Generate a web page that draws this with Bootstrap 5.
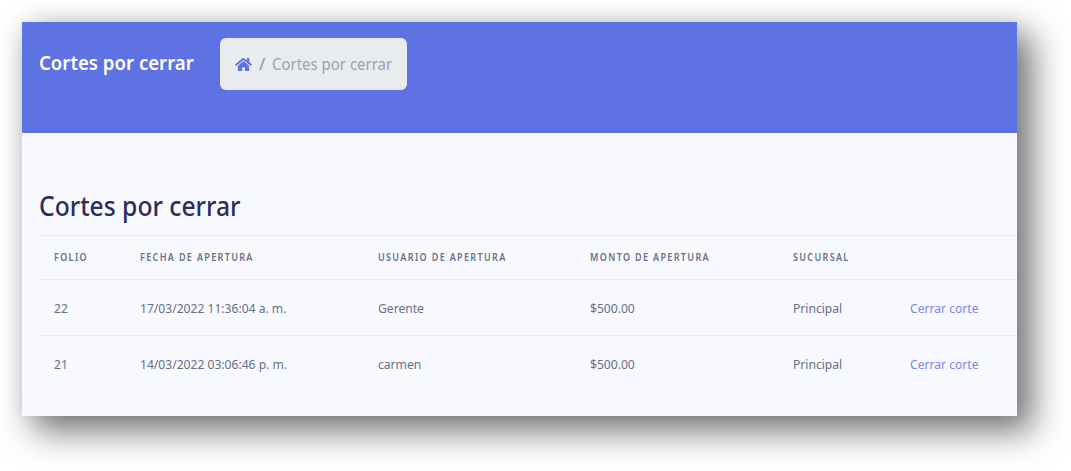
<!DOCTYPE html>
<html lang="es">
<head>
<meta charset="utf-8">
<title>Cortes por cerrar</title>
<link href="https://cdn.jsdelivr.net/npm/bootstrap@5.3.0/dist/css/bootstrap.min.css" rel="stylesheet">
<style>
html,body{height:471px;overflow:hidden;background:#fff;font-family:"Noto Sans","Open Sans",sans-serif}
.stage{padding:22px 54px 55px 22px}
.shell{width:995px;height:394px;background:#f8f9ff;box-shadow:14px 14px 32px 2px rgba(0,0,0,.52),0 0 20px rgba(0,0,0,.09);overflow:hidden}
.hero{height:111px;background:#5e72e4;padding:16px 17px}
.tx{display:inline-block;transform-origin:left center;white-space:nowrap}
.hero-title{width:155px;font-size:20px;font-weight:600;color:#fff;line-height:27px;margin:11px 26px 0 0}
.hero-title .tx{transform:scaleX(.93)}
.crumbs{width:187px;height:52px;background:#e9ecef;border-radius:6px;padding:0 15px;margin:0;font-size:17px;flex-wrap:nowrap;--bs-breadcrumb-margin-bottom:0;--bs-breadcrumb-item-padding-x:7px}
.crumbs .breadcrumb-item{display:flex;align-items:center;color:#9aa3ad;white-space:nowrap}
.crumbs .breadcrumb-item+.breadcrumb-item::before{color:#8a939c}
.crumbs .tx{transform:scaleX(.88)}
.crumbs svg{width:17px;height:15px;display:block}
.content{padding:54px 0 0 17px}
.page-h{font-size:27px;font-weight:500;color:#2f2b5a;line-height:37px;margin:0 0 11px}
.page-h .tx{transform:scaleX(.913)}
.grid-t{width:978px;table-layout:fixed;margin:0;--bs-table-bg:transparent;font-size:14px}
.grid-t th,.grid-t td{padding:0 15px;vertical-align:middle;border-color:#eceef4;border-bottom-width:1px;white-space:nowrap;background:transparent;color:#656f88}
.grid-t thead th{height:44px;border-top:1px solid #eceef4;border-bottom:1px solid #eceef4;font-size:10px;font-weight:600;letter-spacing:1.5px;text-transform:uppercase;color:#6b7188}
.grid-t thead .tx{transform:scaleX(.9)}
.grid-t tbody td{height:56px;padding-top:2px;font-size:13.3px}
.grid-t tbody .tx{transform:scaleX(.91)}
.grid-t tbody tr:last-child td{border-bottom:0}
.c1{width:85.5px}.c2{width:238.5px}.c3{width:212px}.c4{width:203px}.c5{width:117px}
.grid-t .close-link{color:#7a87ef;text-decoration:none}
</style>
</head>
<body>
<div class="stage">
<div class="shell">
  <div class="hero d-flex align-items-start">
    <h1 class="hero-title"><span class="tx">Cortes por cerrar</span></h1>
    <nav aria-label="breadcrumb">
      <ol class="breadcrumb crumbs align-items-center">
        <li class="breadcrumb-item"><svg viewBox="0 0 576 512" aria-hidden="true"><path fill="#5e72e4" d="M280.4 148.300 96 300.100V464a16 16 0 0 0 16 16l112-.3a16 16 0 0 0 15.900-16V368a16 16 0 0 1 16-16h64a16 16 0 0 1 16 16v95.600a16 16 0 0 0 16 16.100l112 .3a16 16 0 0 0 16-16V300L295.700 148.300a12.200 12.200 0 0 0-15.300 0zM571.600 251.500 488 182.600V44.100a12 12 0 0 0-12-12h-56a12 12 0 0 0-12 12v72.600L318.500 43a48 48 0 0 0-61 0L4.300 251.500a12 12 0 0 0-1.600 16.900l25.500 31A12 12 0 0 0 45.200 301l235.200-193.700a12.200 12.200 0 0 1 15.300 0L530.900 301a12 12 0 0 0 16.900-1.600l25.500-31a12 12 0 0 0-1.700-16.900z"/></svg></li>
        <li class="breadcrumb-item active" aria-current="page"><span class="tx">Cortes por cerrar</span></li>
      </ol>
    </nav>
  </div>
  <div class="content">
    <h2 class="page-h"><span class="tx">Cortes por cerrar</span></h2>
    <table class="table grid-t">
      <colgroup><col class="c1"><col class="c2"><col class="c3"><col class="c4"><col class="c5"><col></colgroup>
      <thead>
        <tr><th><span class="tx">Folio</span></th><th><span class="tx">Fecha de apertura</span></th><th><span class="tx">Usuario de apertura</span></th><th><span class="tx">Monto de apertura</span></th><th><span class="tx">Sucursal</span></th><th></th></tr>
      </thead>
      <tbody>
        <tr><td><span class="tx">22</span></td><td><span class="tx">17/03/2022 11:36:04 a. m.</span></td><td><span class="tx">Gerente</span></td><td><span class="tx">$500.00</span></td><td><span class="tx">Principal</span></td><td><a class="close-link tx" href="#">Cerrar corte</a></td></tr>
        <tr><td><span class="tx">21</span></td><td><span class="tx">14/03/2022 03:06:46 p. m.</span></td><td><span class="tx">carmen</span></td><td><span class="tx">$500.00</span></td><td><span class="tx">Principal</span></td><td><a class="close-link tx" href="#">Cerrar corte</a></td></tr>
      </tbody>
    </table>
  </div>
</div>
</div>
</body>
</html>
